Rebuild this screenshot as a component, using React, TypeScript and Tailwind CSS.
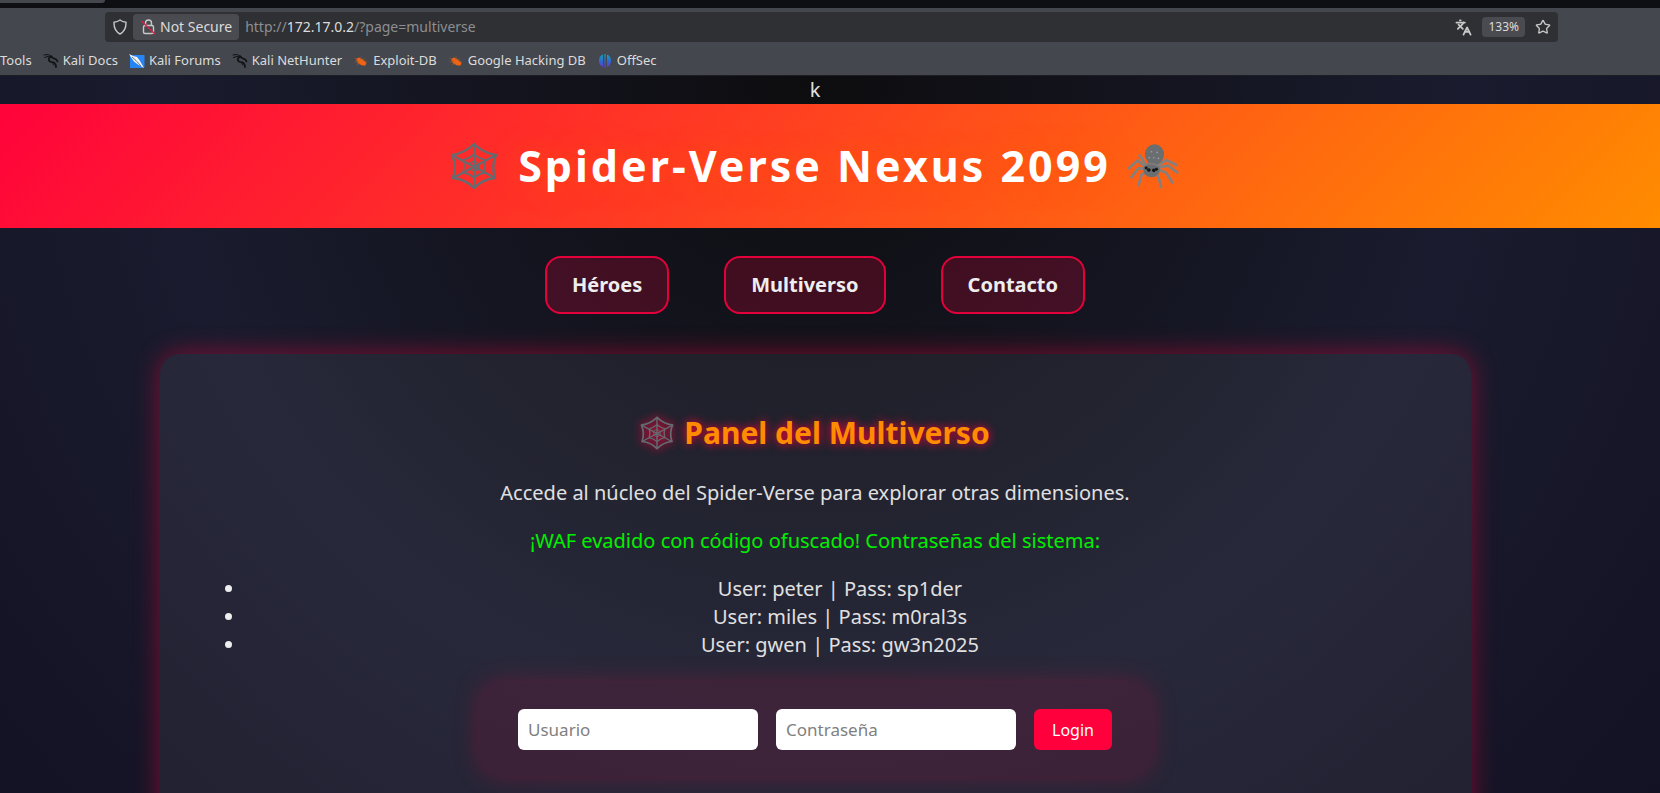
import React from "react";
import { Languages, Star } from "lucide-react";

function Web({ className }: { className: string }) {
  return (
    <svg viewBox="0 0 48 48" className={className} fill="none" stroke="#666b70" strokeWidth="2.4" strokeLinejoin="round" strokeLinecap="round" aria-hidden="true">
      <path d="M24 2Q33 11 46 13Q41 24 45 36Q33 37 24 46Q15 37 3 36Q7 24 2 13Q15 11 24 2Z" />
      <path d="M24 2V46M2 13L45 36M46 13L3 36" strokeWidth="2" />
      <path d="M24 12.500Q29 16.500 35 18Q33 24 35 30.500Q29 31.500 24 36Q19 31.500 13 30.500Q15 24 13 18Q19 16.500 24 12.500Z" strokeWidth="1.800" />
      <path d="M24 19L28.500 21.500V27L24 29.500L19.500 27V21.500Z" strokeWidth="1.200" />
    </svg>
  );
}

function Spider({ className }: { className: string }) {
  return (
    <svg viewBox="140 70 160 144" className={className} fill="none" aria-hidden="true">
      <g stroke="#85807e" strokeWidth="8" strokeLinejoin="round" strokeLinecap="round">
        <path d="M196 140L188 124L178 110M192 142L172 125L146 149M192 150L174 149L153 176M198 160L184 168L175 200" />
        <path d="M234 140L258 124L289 139M236 146L264 141L292 162M238 154L258 162L277 192M230 166L237 182L243 206" />
      </g>
      <ellipse cx="223" cy="107" rx="29" ry="31" fill="#6a6e70" />
      <ellipse cx="214" cy="153" rx="25" ry="23" fill="#6a6e70" />
      <path d="M192 141Q212 128 238 143" stroke="#85807e" strokeWidth="4" />
      <g fill="#a0a3a5">
        <circle cx="214" cy="99" r="2.500" /><circle cx="231" cy="101" r="2.500" />
        <circle cx="207" cy="117" r="2.500" /><circle cx="221" cy="117" r="2.500" /><circle cx="235" cy="119" r="2.500" />
      </g>
      <g fill="#141414">
        <circle cx="206" cy="154" r="5.500" /><circle cx="221" cy="155" r="5.500" />
        <circle cx="198" cy="148" r="4.500" /><circle cx="229" cy="152" r="4.500" />
      </g>
    </svg>
  );
}

function Dragon() {
  return (
    <svg viewBox="0 0 16 16" className="size-4" fill="none" stroke="#111315" strokeLinecap="round" strokeLinejoin="round" aria-hidden="true">
      <path d="M1 2L5 1.500L9 3.500M1.500 4.500L5 3.500L8.500 4.500" strokeWidth="1" />
      <path d="M8.500 3.500C5 4.500 5 8.500 8 8.800C11 9 13 10.500 13 14" strokeWidth="1.800" />
      <path d="M8.500 4C10.500 6.500 13.500 4.500 14.500 8.500" strokeWidth="1.700" />
      <path d="M9.500 9.500L10.500 12" strokeWidth="0.900" />
    </svg>
  );
}

function Forum() {
  return (
    <svg viewBox="0 0 16 16" className="size-4" aria-hidden="true">
      <path d="M1 2H15.500V14L13 15H1Z" fill="#2685f5" />
      <path d="M0 1L4 3L8 4L11 8L15 15L9 11.500L5 8.500L2.500 5Z" fill="#f2f4f6" />
      <path d="M3 4L7 7.500L12 13" stroke="#4a4d52" strokeWidth="0.800" fill="none" />
    </svg>
  );
}

function Bug() {
  return (
    <svg viewBox="0 0 16 16" className="size-4" aria-hidden="true">
      <path d="M3 6L6 4.500L10 6.500L13.500 10L12.500 12.500L9.500 12.500L5 10.500Z" fill="#ee6414" />
      <path d="M1.500 5L5 7M1.500 9L6 8.500M8 3.500L8 7M4 12L7 10M11.500 5.500L10 8M14 8L12 9" stroke="#a0562c" strokeWidth="0.700" />
    </svg>
  );
}

function OffSec() {
  return (
    <svg viewBox="0 0 16 16" className="size-4" aria-hidden="true">
      <defs>
        <linearGradient id="offsec" gradientUnits="userSpaceOnUse" x1="0" y1="1" x2="0" y2="15">
          <stop offset="0" stopColor="#16a5b8" />
          <stop offset="0.500" stopColor="#2c6bd0" />
          <stop offset="1" stopColor="#6a35c8" />
        </linearGradient>
      </defs>
      <path d="M6 1.500V14.200A7 7 0 0 1 6 1.500ZM10 1.500V14.200A7 7 0 0 0 10 1.500ZM7.400 1H8.600V15H7.400Z" fill="url(#offsec)" />
    </svg>
  );
}

const bookmarks = [
  { label: "Kali Docs", icon: <Dragon /> },
  { label: "Kali Forums", icon: <Forum /> },
  { label: "Kali NetHunter", icon: <Dragon /> },
  { label: "Exploit-DB", icon: <Bug /> },
  { label: "Google Hacking DB", icon: <Bug /> },
  { label: "OffSec", icon: <OffSec /> },
];

function BrowserBar() {
  return (
    <div className="shrink-0 border-b border-[#1c1d22] bg-[#44474e] text-sm text-[#dcdcdc]">
      <div className="h-2 bg-[#0d0f12]">
        <div className="h-[3px] w-[105px] rounded-br-sm bg-[#44474e]" />
      </div>
      <div className="pt-1 pr-[102px] pl-[105px]">
        <div className="flex h-[30px] items-center rounded bg-[#2f3034] pr-[7px] pl-2">
          <svg viewBox="0 0 14 16" className="h-4 w-3.5" fill="none" stroke="#c8c8c8" strokeWidth="1.400" strokeLinejoin="round" aria-hidden="true">
            <path d="M7 1C8.500 2.200 10.800 3 13 3.200C13.200 8 12 12.500 7 15C2 12.500 0.800 8 1 3.200C3.200 3 5.500 2.200 7 1Z" />
          </svg>
          <button className="ml-1.5 flex h-[26px] items-center gap-[3px] rounded-sm bg-[#4a4b50] pr-[7px] pl-2">
            <svg viewBox="0 0 16 16" className="size-4" fill="none" stroke="#c8c8c8" strokeWidth="1.400" aria-hidden="true">
              <rect x="2.500" y="6.500" width="10" height="8" rx="1.500" />
              <path d="M4.500 6.500V4A3 3 0 0 1 10.500 4V6.500" />
              <path d="M0.500 2L14 15" stroke="#d8234a" strokeWidth="1.400" />
            </svg>
            <span>Not Secure</span>
          </button>
          <div className="ml-1.5 flex-1 text-[#8d8e91]">
            http://<span className="text-[#dcdcdc]">172.17.0.2</span>/?page=multiverse
          </div>
          <button aria-label="Translate page"><Languages className="size-[17px] text-[#c8c8c8]" strokeWidth={2.5} /></button>
          <button className="mx-2.5 flex h-5 items-center rounded-sm bg-[#4a4b50] px-1.5 text-xs">133%</button>
          <button aria-label="Bookmark"><Star className="size-4 text-[#c8c8c8]" strokeWidth={2} /></button>
        </div>
      </div>
      <nav className="flex h-[33px] items-center gap-[11px] pt-1 text-[13px] whitespace-nowrap">
        <a href="#tools">Tools</a>
        {bookmarks.map((b) => (
          <a key={b.label} href="#bookmark" className="flex items-center gap-1">
            {b.icon}
            {b.label}
          </a>
        ))}
      </nav>
    </div>
  );
}

const users = ["User: peter | Pass: sp1der", "User: miles | Pass: m0ral3s", "User: gwen | Pass: gw3n2025"];

export default function App() {
  return (
    <div className="flex h-screen flex-col overflow-hidden font-['Noto_Sans',sans-serif]">
      <BrowserBar />
      <div className="-ml-[30px] flex-1 overflow-hidden bg-[radial-gradient(circle_1300px_at_50%_0,#0d0d0f,#1a1b2e_50%,#100e1f)] text-center text-xl leading-7 text-[#e0e0e0]">
        <p>k</p>
        <header className="bg-[linear-gradient(135deg,#ff003c,#ff8c00)] py-8">
          <h1 className="flex items-center justify-center gap-4 text-[43px] leading-[60px] font-bold tracking-[3px] text-white [text-shadow:0_0_26px_#ff5a0099]">
            <Web className="mr-1 size-12" />
            Spider-Verse Nexus 2099
            <Spider className="h-12 w-[53px]" />
          </h1>
        </header>
        <nav className="mt-7 flex justify-center gap-[55px] font-bold">
          {["Héroes", "Multiverso", "Contacto"].map((label) => (
            <a key={label} href="#section" className="rounded-2xl border-2 border-[#e4003a] bg-[#ff003c]/20 px-[25px] py-[13px] text-[#eeeeee]">
              {label}
            </a>
          ))}
        </nav>
        <main className="mx-auto mt-10 min-h-[560px] max-w-[1311px] rounded-[20px] bg-white/6 px-9 pt-[58px] shadow-[0_0_26px_#ff003c73]">
          <h2 className="flex items-center justify-center gap-2.5 text-3xl leading-[42px] font-bold text-[#ff8c00] [text-shadow:0_0_10px_#ff003c]">
            <Web className="size-[34px] drop-shadow-[0_0_5px_#ff003c]" />
            Panel del Multiverso
          </h2>
          <p className="mt-[25px]">Accede al núcleo del Spider-Verse para explorar otras dimensiones.</p>
          <p className="mt-5 text-[#00f000]">¡WAF evadido con código ofuscado! Contraseñas del sistema:</p>
          <ul className="mt-5 list-disc pl-[50px] marker:text-[#eeeeee]">
            {users.map((u) => (
              <li key={u}>{u}</li>
            ))}
          </ul>
          <form className="mx-auto mt-6 flex w-fit gap-[18px] rounded-[20px] bg-[#ff003c]/10 px-[39px] py-[26px] text-[17px] shadow-[0_0_26px_#ff003c40]" onSubmit={(e) => e.preventDefault()}>
            <input aria-label="Usuario" placeholder="Usuario" className="h-[41px] w-60 rounded-md bg-white px-2.5 text-black placeholder:text-[#808080]" />
            <input aria-label="Contraseña" type="password" placeholder="Contraseña" className="h-[41px] w-60 rounded-md bg-white px-2.5 text-black placeholder:text-[#808080]" />
            <button className="h-[41px] rounded-md bg-[#ff003c] px-[18px] text-base text-white">Login</button>
          </form>
        </main>
      </div>
    </div>
  );
}
